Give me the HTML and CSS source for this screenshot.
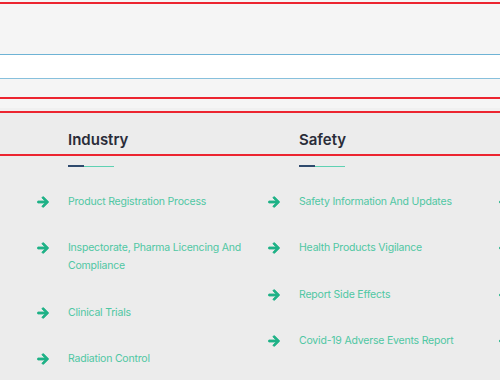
FILE: index.html
```html
<!DOCTYPE html>
<html>
<head>
    <meta charset="utf-8">
    <link rel="stylesheet" href="styles.css">
</head>
<body>
<div class="top-area">
    <div class="top-band"></div>
    <div class="search-field"></div>
    <div class="mid-band"></div>
    <div class="thin-band"></div>
</div>

<div class="footer-menu">
    <div class="menu-heads">
        <h3 class="menu-title">Industry</h3>
        <h3 class="menu-title">Safety</h3>
    </div>

    <div class="menu-columns">
        <div class="menu-col">
            <div class="title-line"><span></span></div>
            <ul class="menu-list">
                <li><svg class="arrow" viewBox="-20 20 488 472"><path d="M190.5 66.9l22.2-22.2c9.4-9.4 24.6-9.4 33.9 0L441 239c9.4 9.4 9.4 24.6 0 33.9L246.6 467.3c-9.4 9.4-24.6 9.4-33.9 0l-22.2-22.2c-9.5-9.5-9.3-25 .4-34.3L311.4 296H24c-13.3 0-24-10.7-24-24v-32c0-13.3 10.7-24 24-24h287.4L190.9 101.2c-9.8-9.3-10-24.8-.4-34.3z"/></svg><a href="#">Product Registration Process</a></li>
                <li><svg class="arrow" viewBox="-20 20 488 472"><path d="M190.5 66.9l22.2-22.2c9.4-9.4 24.6-9.4 33.9 0L441 239c9.4 9.4 9.4 24.6 0 33.9L246.6 467.3c-9.4 9.4-24.6 9.4-33.9 0l-22.2-22.2c-9.5-9.5-9.3-25 .4-34.3L311.4 296H24c-13.3 0-24-10.7-24-24v-32c0-13.3 10.7-24 24-24h287.4L190.9 101.2c-9.8-9.3-10-24.8-.4-34.3z"/></svg><a href="#">Inspectorate, Pharma Licencing And Compliance</a></li>
                <li><svg class="arrow" viewBox="-20 20 488 472"><path d="M190.5 66.9l22.2-22.2c9.4-9.4 24.6-9.4 33.9 0L441 239c9.4 9.4 9.4 24.6 0 33.9L246.6 467.3c-9.4 9.4-24.6 9.4-33.9 0l-22.2-22.2c-9.5-9.5-9.3-25 .4-34.3L311.4 296H24c-13.3 0-24-10.7-24-24v-32c0-13.3 10.7-24 24-24h287.4L190.9 101.2c-9.8-9.3-10-24.8-.4-34.3z"/></svg><a href="#">Clinical Trials</a></li>
                <li><svg class="arrow" viewBox="-20 20 488 472"><path d="M190.5 66.9l22.2-22.2c9.4-9.4 24.6-9.4 33.9 0L441 239c9.4 9.4 9.4 24.6 0 33.9L246.6 467.3c-9.4 9.4-24.6 9.4-33.9 0l-22.2-22.2c-9.5-9.5-9.3-25 .4-34.3L311.4 296H24c-13.3 0-24-10.7-24-24v-32c0-13.3 10.7-24 24-24h287.4L190.9 101.2c-9.8-9.3-10-24.8-.4-34.3z"/></svg><a href="#">Radiation Control</a></li>
            </ul>
        </div>

        <div class="menu-col">
            <div class="title-line"><span></span></div>
            <ul class="menu-list">
                <li><svg class="arrow" viewBox="-20 20 488 472"><path d="M190.5 66.9l22.2-22.2c9.4-9.4 24.6-9.4 33.9 0L441 239c9.4 9.4 9.4 24.6 0 33.9L246.6 467.3c-9.4 9.4-24.6 9.4-33.9 0l-22.2-22.2c-9.5-9.5-9.3-25 .4-34.3L311.4 296H24c-13.3 0-24-10.7-24-24v-32c0-13.3 10.7-24 24-24h287.4L190.9 101.2c-9.8-9.3-10-24.8-.4-34.3z"/></svg><a href="#">Safety Information And Updates</a></li>
                <li><svg class="arrow" viewBox="-20 20 488 472"><path d="M190.5 66.9l22.2-22.2c9.4-9.4 24.6-9.4 33.9 0L441 239c9.4 9.4 9.4 24.6 0 33.9L246.6 467.3c-9.4 9.4-24.6 9.4-33.9 0l-22.2-22.2c-9.5-9.5-9.3-25 .4-34.3L311.4 296H24c-13.3 0-24-10.7-24-24v-32c0-13.3 10.7-24 24-24h287.4L190.9 101.2c-9.8-9.3-10-24.8-.4-34.3z"/></svg><a href="#">Health Products Vigilance</a></li>
                <li><svg class="arrow" viewBox="-20 20 488 472"><path d="M190.5 66.9l22.2-22.2c9.4-9.4 24.6-9.4 33.9 0L441 239c9.4 9.4 9.4 24.6 0 33.9L246.6 467.3c-9.4 9.4-24.6 9.4-33.9 0l-22.2-22.2c-9.5-9.5-9.3-25 .4-34.3L311.4 296H24c-13.3 0-24-10.7-24-24v-32c0-13.3 10.7-24 24-24h287.4L190.9 101.2c-9.8-9.3-10-24.8-.4-34.3z"/></svg><a href="#">Report Side Effects</a></li>
                <li><svg class="arrow" viewBox="-20 20 488 472"><path d="M190.5 66.9l22.2-22.2c9.4-9.4 24.6-9.4 33.9 0L441 239c9.4 9.4 9.4 24.6 0 33.9L246.6 467.3c-9.4 9.4-24.6 9.4-33.9 0l-22.2-22.2c-9.5-9.5-9.3-25 .4-34.3L311.4 296H24c-13.3 0-24-10.7-24-24v-32c0-13.3 10.7-24 24-24h287.4L190.9 101.2c-9.8-9.3-10-24.8-.4-34.3z"/></svg><a href="#">Covid-19 Adverse Events Report</a></li>
            </ul>
        </div>

        <!-- next column starts just at the right edge: only its arrows show -->
        <div class="menu-col menu-col-edge">
            <ul class="menu-list">
                <li><svg class="arrow" viewBox="-20 20 488 472"><path d="M190.5 66.9l22.2-22.2c9.4-9.4 24.6-9.4 33.9 0L441 239c9.4 9.4 9.4 24.6 0 33.9L246.6 467.3c-9.4 9.4-24.6 9.4-33.9 0l-22.2-22.2c-9.5-9.5-9.3-25 .4-34.3L311.4 296H24c-13.3 0-24-10.7-24-24v-32c0-13.3 10.7-24 24-24h287.4L190.9 101.2c-9.8-9.3-10-24.8-.4-34.3z"/></svg></li>
                <li><svg class="arrow" viewBox="-20 20 488 472"><path d="M190.5 66.9l22.2-22.2c9.4-9.4 24.6-9.4 33.9 0L441 239c9.4 9.4 9.4 24.6 0 33.9L246.6 467.3c-9.4 9.4-24.6 9.4-33.9 0l-22.2-22.2c-9.5-9.5-9.3-25 .4-34.3L311.4 296H24c-13.3 0-24-10.7-24-24v-32c0-13.3 10.7-24 24-24h287.4L190.9 101.2c-9.8-9.3-10-24.8-.4-34.3z"/></svg></li>
                <li><svg class="arrow" viewBox="-20 20 488 472"><path d="M190.5 66.9l22.2-22.2c9.4-9.4 24.6-9.4 33.9 0L441 239c9.4 9.4 9.4 24.6 0 33.9L246.6 467.3c-9.4 9.4-24.6 9.4-33.9 0l-22.2-22.2c-9.5-9.5-9.3-25 .4-34.3L311.4 296H24c-13.3 0-24-10.7-24-24v-32c0-13.3 10.7-24 24-24h287.4L190.9 101.2c-9.8-9.3-10-24.8-.4-34.3z"/></svg></li>
                <li><svg class="arrow" viewBox="-20 20 488 472"><path d="M190.5 66.9l22.2-22.2c9.4-9.4 24.6-9.4 33.9 0L441 239c9.4 9.4 9.4 24.6 0 33.9L246.6 467.3c-9.4 9.4-24.6 9.4-33.9 0l-22.2-22.2c-9.5-9.5-9.3-25 .4-34.3L311.4 296H24c-13.3 0-24-10.7-24-24v-32c0-13.3 10.7-24 24-24h287.4L190.9 101.2c-9.8-9.3-10-24.8-.4-34.3z"/></svg></li>
            </ul>
        </div>
    </div>
</div>
</body>
</html>
```

FILE: styles.css
```css
* {
    margin: 0;
    padding: 0;
    box-sizing: border-box;
}

body {
    width: 500px;
    height: 380px;
    overflow: hidden;
    background: #ececec;
    font-family: 'Inter', 'Noto Sans', sans-serif;
}

/* Upper strips (outlined blocks) */
.top-area {
    background: #f5f5f5;
    padding-top: 2px;
}

.top-band {
    height: 52px;
    border-top: 2px solid #ec2530;
}

.search-field {
    height: 25px;
    background: #fff;
    border-top: 1px solid #6eb3d5;
    border-bottom: 1px solid #87c0dc;
}

.mid-band {
    height: 18px;
}

.thin-band {
    height: 16px;
    border-top: 2px solid #ec2530;
    border-bottom: 2px solid #ec2530;
    background: linear-gradient(#f5f5f5 0, #f5f5f5 9px, #f0f0f0 9px);
}

/* Footer menu */
.footer-menu {
    padding-left: 37px;
}

.menu-heads {
    display: flex;
    height: 43px;
    margin-left: -37px;
    padding-left: 37px;
    border-bottom: 2px solid #ec2530;
}

.menu-title {
    width: 231px;
    flex-shrink: 0;
    padding: 13px 0 0 31px;
    font-size: 15px;
    line-height: 28px;
    font-weight: 600;
    color: #2a2c39;
}

.menu-columns {
    display: flex;
}

.menu-col {
    width: 231px;
    flex-shrink: 0;
}

.menu-col-edge {
    width: 12px;
    padding-top: 11px;
}

.title-line {
    margin: 9px 0 0 31px;
    width: 46px;
    height: 2px;
    display: flex;
    align-items: flex-end;
}

.title-line span {
    display: block;
    width: 16px;
    height: 2px;
    background: #2f4a6d;
}

.title-line::after {
    content: "";
    flex: 1;
    height: 1px;
    background: #5fd1b3;
}

.menu-list {
    list-style: none;
    margin-top: 25.5px;
    display: flex;
    flex-direction: column;
    gap: 28.5px;
}

.menu-list li {
    display: flex;
    align-items: flex-start;
    min-height: 18px;
}

/* bolder arrow: fill plus a stroke of the same colour */
.arrow {
    width: 12px;
    height: 12px;
    margin: 3px 19px 0 0;
    flex-shrink: 0;
    fill: #1fb287;
    stroke: #1fb287;
    stroke-width: 36;
    stroke-linejoin: round;
}

.menu-list a {
    width: 180px;
    font-size: 10.5px;
    line-height: 18px;
    letter-spacing: -0.2px;
    color: #4fc7a3;
    text-decoration: none;
}
```
